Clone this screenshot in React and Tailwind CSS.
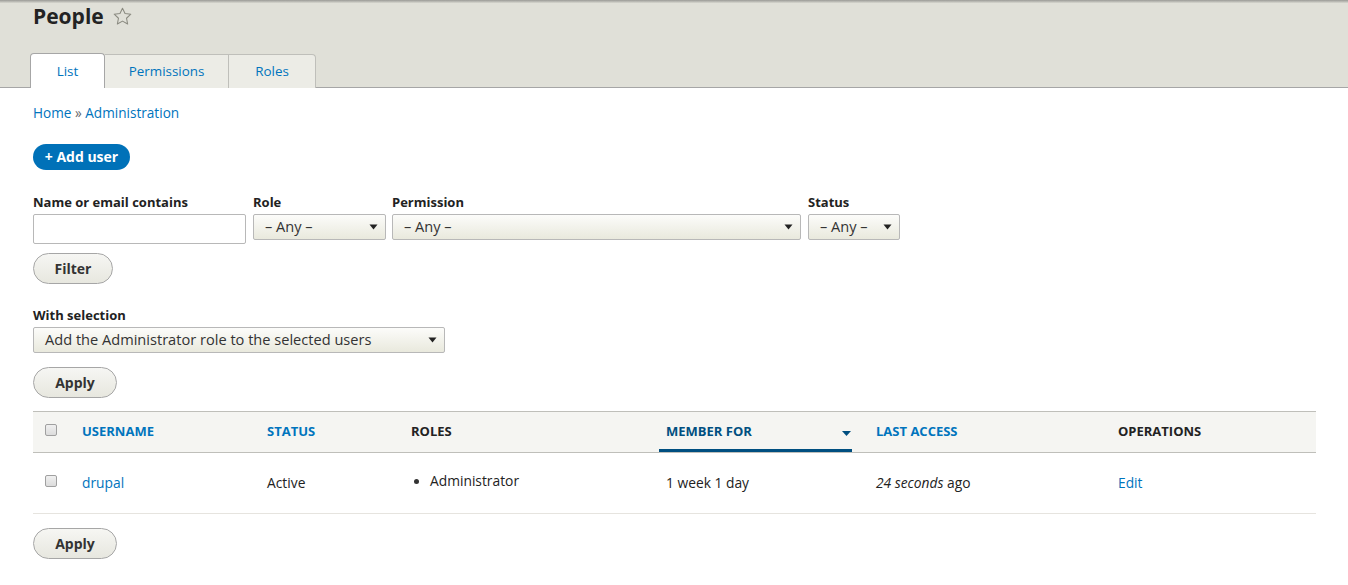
import React from "react";

const font = { fontFamily: '"Open Sans", "Noto Sans", sans-serif' };

function Arrow() {
  return (
    <svg width="9" height="6" viewBox="0 0 9 6" className="shrink-0">
      <path d="M0.5 0.5h8L4.5 5.5z" fill="#222" />
    </svg>
  );
}

function Select({ label, width }) {
  return (
    <div
      className={`h-[26px] flex items-center justify-between pl-[11px] pr-[7px] border border-[#b8b8b8] rounded-[2px] bg-gradient-to-b from-[#fcfcfa] to-[#e9e9dd] text-[14.6px] text-[#333] ${width}`}
    >
      <span className="whitespace-nowrap">{label}</span>
      <Arrow />
    </div>
  );
}

function Button({ children, width }) {
  return (
    <div
      className={`h-[31px] flex items-center justify-center rounded-full border border-[#a6a6a6] bg-gradient-to-b from-[#f6f6f3] to-[#e7e7df] text-[14px] font-bold text-[#333] ${width}`}
    >
      {children}
    </div>
  );
}

function Checkbox() {
  return (
    <div className="w-[12px] h-[12px] rounded-[2px] border border-[#a0a0a0] bg-gradient-to-b from-[#f0f0f0] to-[#dcdcdc]" />
  );
}

export default function App() {
  return (
    <div className="w-[1348px] h-[585px] bg-white overflow-hidden text-[#222]" style={font}>
      <div className="bg-[#e0e0d8] border-b border-[#a6a6a6] relative">
        <div className="h-[3px] bg-gradient-to-b from-[#9a9a96] to-[#d8d8d0]" />
        <div className="flex items-center gap-[8px] pl-[33px] h-[27px]">
          <h1 className="text-[21px] font-bold leading-[27px] text-[#232323]">People</h1>
          <svg width="21" height="21" viewBox="0 0 24 24">
            <path
              d="M12 2.5l2.9 6.1 6.6.8-4.9 4.6 1.3 6.6L12 17.3l-5.9 3.3 1.3-6.6-4.9-4.6 6.6-.8z"
              fill="none"
              stroke="#8a8a80"
              strokeWidth="1.2"
              strokeLinejoin="round"
            />
          </svg>
        </div>
        <div className="flex pl-[30px] mt-[23px] -mb-[1px]">
          <div className="w-[75px] h-[35px] flex items-center justify-center bg-white border border-b-0 border-[#a6a6a6] rounded-t-[4px] text-[13.4px] text-[#0074bd]">
            List
          </div>
          <div className="w-[124px] h-[34px] mt-[1px] flex items-center justify-center bg-[#ecece6] border border-l-0 border-b-0 border-[#bfbfba] text-[13.4px] text-[#0074bd]">
            Permissions
          </div>
          <div className="w-[87px] h-[34px] mt-[1px] flex items-center justify-center bg-[#ecece6] border border-l-0 border-b-0 border-[#bfbfba] rounded-tr-[4px] text-[13.4px] text-[#0074bd]">
            Roles
          </div>
        </div>
      </div>

      <div className="px-[33px] pr-[32px]">
        <div className="mt-[16px] text-[13.6px] text-[#0074bd] leading-[18px]">
          Home <span className="text-[#666]">»</span> Administration
        </div>
        <div className="mt-[22px] w-[97px] h-[26px] rounded-full bg-[#0071b8] text-white text-[14px] font-bold flex items-center justify-center leading-none">
          + Add user
        </div>

        <div className="mt-[23px] flex items-start">
          <div className="flex flex-col mr-[7px]">
            <div className="text-[13px] font-bold leading-[18px] text-[#222]">Name or email contains</div>
            <div className="mt-[3px] w-[213px] h-[30px] border border-[#b8b8b8] rounded-[2px] bg-white" />
          </div>
          <div className="flex flex-col mr-[6px]">
            <div className="text-[13px] font-bold leading-[18px]">Role</div>
            <div className="mt-[3px]">
              <Select label={"\u2013 Any \u2013"} width="w-[133px]" />
            </div>
          </div>
          <div className="flex flex-col mr-[7px]">
            <div className="text-[13px] font-bold leading-[18px]">Permission</div>
            <div className="mt-[3px]">
              <Select label={"\u2013 Any \u2013"} width="w-[409px]" />
            </div>
          </div>
          <div className="flex flex-col">
            <div className="text-[13px] font-bold leading-[18px]">Status</div>
            <div className="mt-[3px]">
              <Select label={"\u2013 Any \u2013"} width="w-[92px]" />
            </div>
          </div>
        </div>
        <div className="mt-[9px]">
          <Button width="w-[80px]">Filter</Button>
        </div>

        <div className="mt-[22px] text-[13px] font-bold leading-[18px]">With selection</div>
        <div className="mt-[3px]">
          <Select label="Add the Administrator role to the selected users" width="w-[412px]" />
        </div>
        <div className="mt-[14px]">
          <Button width="w-[84px]">Apply</Button>
        </div>

        <div className="mt-[13px] w-[1283px] border-t border-[#bfbfba]">
          <div className="h-[41px] bg-[#f5f5f2] border-b border-[#bfbfba] flex items-center text-[13px] font-bold uppercase relative">
            <div className="w-[49px] pl-[12px] -mt-[5px]">
              <Checkbox />
            </div>
            <div className="w-[185px] text-[#0074bd]">Username</div>
            <div className="w-[144px] text-[#0074bd]">Status</div>
            <div className="w-[255px] text-[#222]">Roles</div>
            <div className="w-[210px] h-full flex items-center relative">
              <div className="absolute left-[-7px] right-[24px] bottom-[0px] h-[3px] bg-[#004f80]" />
              <span className="text-[#004f80]">Member for</span>
              <span className="ml-auto mr-[25px] mt-[3px]">
                <svg width="9" height="5" viewBox="0 0 9 5"><path d="M0 0h9L4.5 5z" fill="#004f80" /></svg>
              </span>
            </div>
            <div className="w-[242px] text-[#0074bd]">Last access</div>
            <div className="text-[#222]">Operations</div>
          </div>
          <div className="h-[61px] border-b border-[#e6e4df] flex items-center text-[13.8px]">
            <div className="w-[49px] pl-[12px] -mt-[4px]">
              <Checkbox />
            </div>
            <div className="w-[185px] text-[#0074bd]">drupal</div>
            <div className="w-[144px] text-[#222]">Active</div>
            <div className="w-[255px] text-[#222] flex items-center -mt-[4px]">
              <span className="w-[5px] h-[5px] rounded-full bg-[#333] ml-[3px] mr-[11px]" />
              Administrator
            </div>
            <div className="w-[210px] text-[#222]">1 week 1 day</div>
            <div className="w-[242px] text-[#222]">
              <em>24 seconds</em> ago
            </div>
            <div className="text-[#0074bd]">Edit</div>
          </div>
        </div>
        <div className="mt-[14px]">
          <Button width="w-[84px]">Apply</Button>
        </div>
      </div>
    </div>
  );
}
